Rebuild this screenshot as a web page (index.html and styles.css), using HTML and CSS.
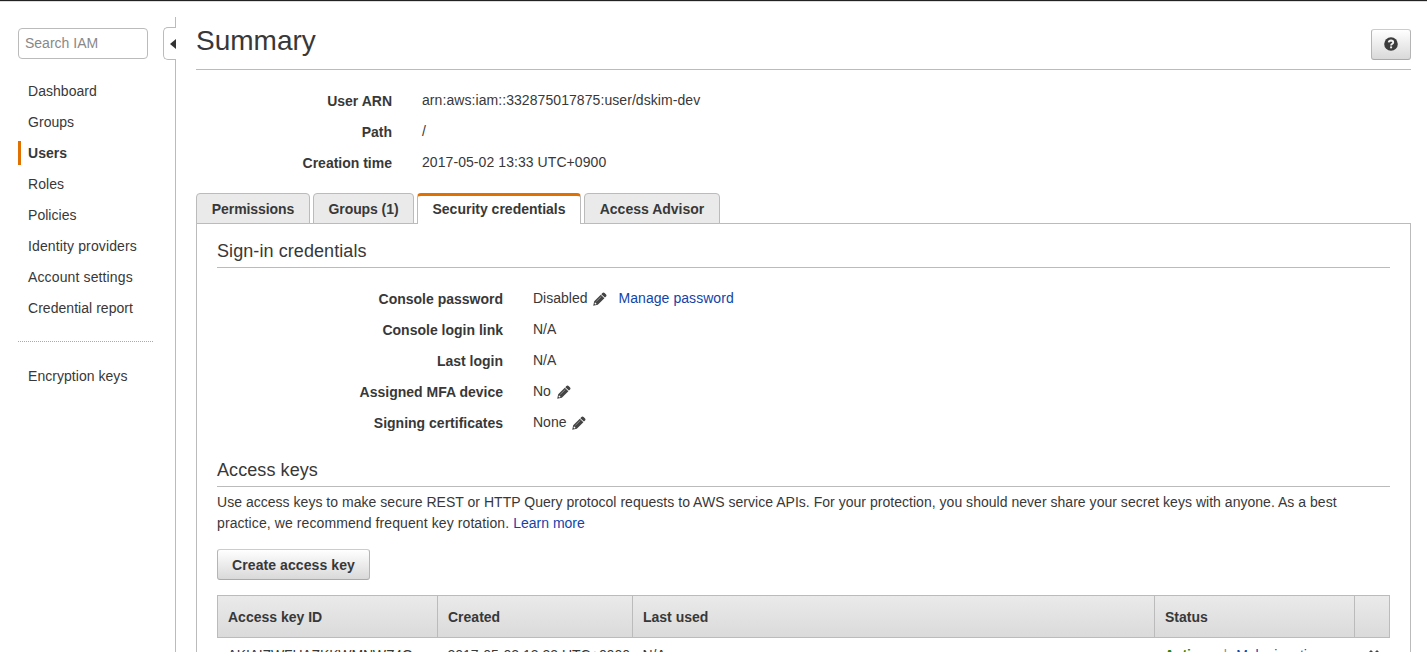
FILE: index.html
```html
<!DOCTYPE html>
<html lang="en">
<head>
<meta charset="utf-8">
<title>IAM - Summary</title>
<link rel="stylesheet" href="styles.css">
</head>
<body>
<svg class="defs" width="0" height="0" aria-hidden="true">
  <symbol id="pencil" viewBox="0 0 14 14">
    <path fill="#444" d="M9.400 1 Q10.500 0 11.600 .9 L13.100 2.400 Q14 3.400 13.100 4.400 L11.900 5.600 L8.300 2.200Z M7.800 2.700 L11.400 6.200 L4.800 12.700 L.2 13.800 L1.200 9.200Z"/>
    <path fill="none" stroke="#aaa" stroke-width=".7" d="M3.300 9.400 L8.300 4.500"/>
    <path fill="#fff" d="M2 10.300 L3.700 12 L2.200 12.400 L1.500 11.800Z"/>
  </symbol>
</svg>
<div class="app">
  <nav class="sidebar">
    <input class="search" type="text" placeholder="Search IAM">
    <ul class="menu">
      <li><a class="item">Dashboard</a></li>
      <li><a class="item">Groups</a></li>
      <li><a class="item current">Users</a></li>
      <li><a class="item">Roles</a></li>
      <li><a class="item">Policies</a></li>
      <li><a class="item wide">Identity providers</a></li>
      <li><a class="item wide">Account settings</a></li>
      <li><a class="item">Credential report</a></li>
    </ul>
    <div class="separator"></div>
    <a class="item">Encryption keys</a>
    <div class="collapse"><svg width="6" height="10" viewBox="0 0 6 10"><path fill="#333" d="M6 0V10L0 5Z"/></svg></div>
  </nav>
  <main class="main">
    <header class="header">
      <h1 class="title">Summary</h1>
      <button class="btn help" aria-label="Help">
        <svg width="14" height="14" viewBox="0 0 14 14"><circle cx="7" cy="7" r="6.800" fill="#3c3c3c"/><path fill="none" stroke="#f2f2f2" stroke-width="1.900" d="M4.700 5.300 Q5 3.500 7 3.500 Q9.200 3.600 9.200 5.200 Q9.200 6.200 8.100 6.800 Q7.100 7.300 7.100 8.500"/><path fill="#f2f2f2" d="M6.100 9.400h2v1.900h-2z"/></svg>
      </button>
    </header>
    <dl class="facts summary">
      <dt>User ARN</dt><dd class="arn">arn:aws:iam::332875017875:user/dskim-dev</dd>
      <dt>Path</dt><dd>/</dd>
      <dt>Creation time</dt><dd class="date">2017-05-02 13:33 UTC+0900</dd>
    </dl>
    <div class="tabs">
      <a class="tab t1">Permissions</a><a class="tab t2">Groups (1)</a><a class="tab t3 active">Security credentials</a><a class="tab t4">Access Advisor</a>
    </div>
    <section class="panel">
      <h2 class="heading">Sign-in credentials</h2>
      <dl class="facts credentials">
        <dt>Console password</dt><dd>Disabled<svg class="pencil"><use href="#pencil"/></svg><a class="link manage">Manage password</a></dd>
        <dt>Console login link</dt><dd>N/A</dd>
        <dt>Last login</dt><dd>N/A</dd>
        <dt>Assigned MFA device</dt><dd>No<svg class="pencil"><use href="#pencil"/></svg></dd>
        <dt>Signing certificates</dt><dd>None<svg class="pencil"><use href="#pencil"/></svg></dd>
      </dl>
      <h2 class="heading">Access keys</h2>
      <p class="intro"><span class="line1">Use access keys to make secure REST or HTTP Query protocol requests to AWS service APIs. For your protection, you should never share your secret keys with anyone. As a best</span><br><span class="line2">practice, we recommend frequent key rotation. </span><a class="link">Learn more</a></p>
      <button class="btn create">Create access key</button>
      <table class="keys">
        <colgroup><col class="c1"><col class="c2"><col class="c3"><col class="c4"><col class="c5"></colgroup>
        <thead><tr><th>Access key ID</th><th>Created</th><th>Last used</th><th>Status</th><th></th></tr></thead>
        <tbody><tr><td class="key-id">AKIAIZWFHAZKKWMNWZ4Q</td><td>2017-05-02 13:33 UTC+0900</td><td>N/A</td><td><span class="status">Active</span><span class="bar">|</span><a class="link">Make inactive</a></td><td class="remove"><svg width="10" height="10" viewBox="0 0 10 10"><path fill="none" stroke="#444" stroke-width="2.800" d="M1 1L9 9M9 1L1 9"/></svg></td></tr></tbody>
      </table>
    </section>
  </main>
</div>
</body>
</html>
```
FILE: styles.css
```css
* { box-sizing: border-box; }
html, body { margin: 0; height: 100%; overflow: hidden; }
body { background: #fff; color: #383838; font: 14px/21px "Liberation Sans", Arial, sans-serif; border-top: 1px solid #222; }
.defs { position: absolute; }
.app { display: flex; height: 651px; overflow: hidden; border-top: 1px solid #ddd; }
.sidebar { position: relative; flex: none; width: 176px; height: 635px; margin-top: 15px; border-right: 1px solid #bbb; padding: 11px 22px 0 18px; }
.search { display: block; width: 130px; height: 31px; border: 1px solid #bbb; border-radius: 4px; padding: 0 6px 2px; font: inherit; }
.search::placeholder { color: #888; opacity: 1; }
.menu { list-style: none; margin: 20px 0 0; padding: 0; }
.item { display: block; height: 24px; margin-bottom: 7px; padding-left: 10px; line-height: 25px; white-space: nowrap; letter-spacing: .04px; }
.item.wide { letter-spacing: .13px; }
.item.current { border-left: 3px solid #e07000; padding-left: 7px; font-weight: bold; }
.separator { border-top: 1px dotted #aaa; margin: 21px 0 22px; }
.collapse { position: absolute; left: 163px; top: 10px; width: 13px; height: 33px; background: #fff; border: 1px solid #bbb; border-right: 0; border-radius: 5px 0 0 5px; display: flex; align-items: center; justify-content: flex-end; }
.main { flex: none; width: 1215px; margin-left: 20px; }
.header { display: flex; justify-content: space-between; height: 68px; border-bottom: 1px solid #bbb; }
.title { margin: 22px 0 0; font-size: 28px; line-height: 34px; font-weight: normal; }
.btn { border: 1px solid #b5b5b5; border-top-color: #ccc; border-bottom-color: #aaa; border-radius: 3px; background: linear-gradient(#fff, #d9d9d9); color: #383838; font: bold 14px "Liberation Sans", Arial, sans-serif; padding: 0; }
.help { display: flex; align-items: center; justify-content: center; width: 40px; height: 31px; margin-top: 27px; padding-bottom: 1px; }
.facts { display: grid; column-gap: 30px; grid-auto-rows: 31px; margin: 0; line-height: 31px; white-space: nowrap; }
.facts dt { font-weight: bold; text-align: right; padding-top: 1px; }
.facts dd { display: flex; margin: 0; }
.arn, .date { letter-spacing: .07px; }
.summary { grid-template-columns: 196px 1fr; padding-top: 15px; height: 123px; }
.credentials { grid-template-columns: 286px 1fr; padding-top: 15px; height: 186px; }
.pencil { width: 14px; height: 14px; margin: 9px 0 0 6px; }
.link { color: #1144aa; }
.manage { margin-left: 11px; letter-spacing: .06px; }
.tabs { display: flex; gap: 3px; height: 31px; margin-bottom: -1px; position: relative; }
.tab { height: 31px; border: 1px solid #bbb; border-radius: 4px 4px 0 0; background: #eaeaea; font-weight: bold; line-height: 31px; text-align: center; white-space: nowrap; }
.t1 { width: 114px; }
.t2 { width: 101px; }
.t3 { width: 164px; }
.t4 { width: 136px; }
.t1, .t2 { letter-spacing: -.08px; }
.tab.active { background: #fff; border-top: 3px solid #e07000; border-bottom: 0; line-height: 27px; }
.panel { height: 429px; border: 1px solid #bbb; border-bottom: 0; padding: 17px 20px 0; }
.heading { margin: 0; height: 27px; border-bottom: 1px solid #bbb; font-size: 18px; line-height: 21px; font-weight: normal; letter-spacing: .08px; }
.credentials + .heading { margin-top: 6px; }
.intro { margin: 5px 0 0; white-space: nowrap; }
.line1 { letter-spacing: .028px; }
.line2 { letter-spacing: .095px; }
.create { display: block; width: 153px; height: 31px; margin-top: 15px; letter-spacing: .08px; }
.keys { width: 1173px; margin-top: 15px; table-layout: fixed; border-collapse: collapse; text-align: left; white-space: nowrap; }
.c1 { width: 220px; }
.c2 { width: 195px; }
.c3 { width: 522px; }
.c4 { width: 200px; }
.c5 { width: 35px; }
.keys thead tr { background: linear-gradient(#eaeaea, #dadada); }
.keys th { height: 42px; border: 1px solid #bbb; padding: 1px 10px 0; }
.keys td { height: 34px; padding: 2px 10px 0; }
.keys .key-id { letter-spacing: -.15px; }
.keys .remove { padding-left: 14px; }
.status { color: #228811; font-weight: bold; }
.bar { margin: 0 9px 0 17px; color: #888; }
```
